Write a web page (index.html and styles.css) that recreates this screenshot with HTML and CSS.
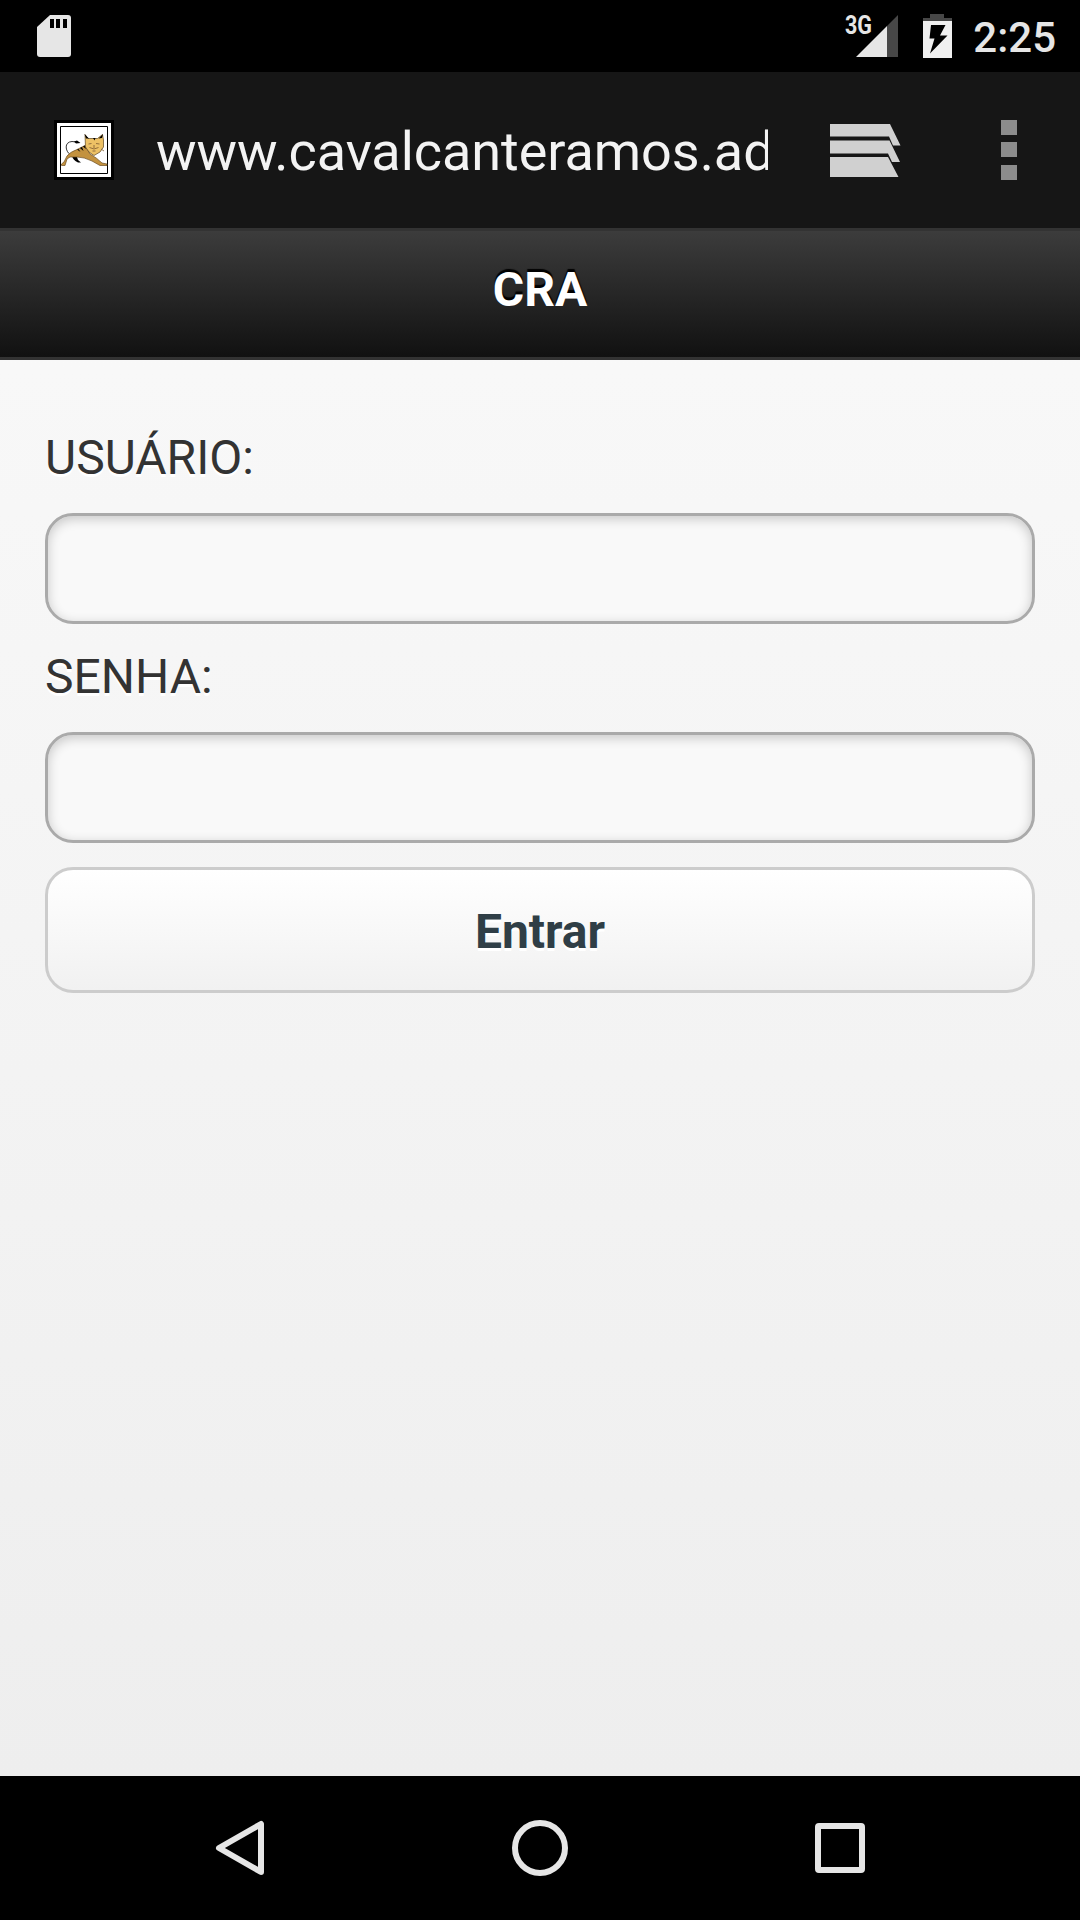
FILE: index.html
```html
<!DOCTYPE html>
<html lang="pt-BR">
<head>
    <meta charset="UTF-8">
    <meta name="viewport" content="width=device-width, initial-scale=1.0">
    <title>CRA</title>
    <link rel="stylesheet" href="styles.css">
</head>
<body>
    <!-- Status bar -->
    <div class="status-bar">
        <svg class="sd-card" width="34" height="42" viewBox="0 0 34 42">
            <path fill="#e6e6e6" d="M13 0H31Q34 0 34 3V39Q34 42 31 42H3Q0 42 0 39V12Z"/>
            <path d="M13 4h4v9h-4zM19 4h4v9h-4zM26 4h4v9h-4z"/>
        </svg>
        <div class="status-right">
            <svg class="signal" width="54" height="42" viewBox="0 0 54 42">
                <path fill="#474747" d="M54 0V42H43V11Z"/>
                <path fill="#e6e6e6" d="M12 42L43 11V42Z"/>
                <text x="1" y="18.500" textLength="27" lengthAdjust="spacingAndGlyphs">3G</text>
            </svg>
            <svg class="battery" width="29" height="44" viewBox="0 0 29 44">
                <path fill="#474747" d="M7 0H21V4H29V7H0V4H7Z"/>
                <path fill="#f0f0f0" d="M0 7H29V44H0Z"/>
                <path d="M8 11H22.500L17 21.500H24.500L7 39.500L11.500 24.500H6.500Z"/>
            </svg>
            <span class="clock">2:25</span>
        </div>
    </div>

    <!-- Address bar -->
    <div class="url-bar">
        <svg class="favicon" width="60" height="60" viewBox="0 0 60 60">
            <path d="M0 0H60V60H0Z"/>
            <path fill="#fff" d="M3 3H57V57H3Z"/>
            <path fill="none" stroke="#000" d="M6.500 6.500H53.500V53.500H6.500Z"/>
            <path fill="none" stroke="#333" d="M16.500 35C11 31 10 22 18 21.500L22 22"/>
            <path d="M20 21.500L23 20.500L26.500 23L22 23.500ZM18 36L23 37L24 40L27 42.500H24Q19 40 18 36Z"/>
            <path fill="#c3923f" stroke="#6b4e22" stroke-width=".7" d="M7.500 45.500V44L10 42L13 36Q16 32 23 29.500L31 25.500L36 34Q43 38 48 43L53 44V45.500H46L38 41Q30 37 23 37L16 37L13 39L11 45.500Z"/>
            <path fill="#edc165" stroke="#5d4520" stroke-width=".7" d="M31 14.500L34 18.500H43.500L48.500 14.500L49.500 20V27L46 32L40 35.500L35 32L31.500 27Z"/>
            <path d="M30.500 14L35 18.500L32 18.500ZM49 14L44.500 18.500L48 18ZM39 18H41.500L40.500 20.500ZM23 29.500L24.500 29L26.500 32ZM26 28L28 27L29.500 31ZM29 26.500L30.500 25.500L32 29Z"/>
            <path fill="none" stroke="#7c5930" stroke-width=".8" d="M34.500 24L37.500 23.500M42 23.500L45.500 24M35.500 27.500Q40 30.500 44.500 27.500M40 25V28M38.500 31H41.500M47 29L50 31"/>
        </svg>
        <div class="url">www.cavalcanteramos.ad</div>
        <svg class="tabs" width="72" height="54" viewBox="0 0 72 54">
            <path fill="#d0d0d0" d="M0 0H60L70.500 21.500H63L59 12.500H0ZM0 16.500H59.500L70 38H62L58 29.500H0ZM0 33H58L68.500 53H0Z"/>
        </svg>
        <svg class="menu" width="16" height="60" viewBox="0 0 16 60">
            <path fill="#8c8c8c" d="M0 0H16V15H0ZM0 22H16V37H0ZM0 45H16V60H0Z"/>
        </svg>
    </div>

    <!-- Login page -->
    <div class="page">
        <div class="header"><h1>CRA</h1></div>
        <form class="content">
            <label for="usuario">USUÁRIO:</label>
            <input type="text" id="usuario">
            <label for="senha">SENHA:</label>
            <input type="password" id="senha">
            <button type="button">Entrar</button>
        </form>
    </div>

    <!-- Navigation buttons -->
    <div class="nav-bar">
        <svg width="60" height="60" viewBox="0 0 60 60">
            <path d="M51 6V54L9 30Z"/>
        </svg>
        <svg width="60" height="60" viewBox="0 0 60 60">
            <circle cx="30" cy="30" r="25"/>
        </svg>
        <svg width="60" height="60" viewBox="0 0 60 60">
            <rect x="8" y="8" width="44" height="44" rx="1"/>
        </svg>
    </div>
</body>
</html>
```
FILE: styles.css
```css
* {
    box-sizing: border-box;
}

body {
    margin: 0;
    height: 1920px;
    display: flex;
    flex-direction: column;
    font-family: Roboto, sans-serif;
    background: #000;
    overflow: hidden;
}

svg {
    display: block;
    flex: none;
}

/* Status bar */
.status-bar {
    height: 72px;
    display: flex;
    justify-content: space-between;
    padding: 0 24px 0 37px;
    background: #000;
}

.sd-card {
    margin-top: 15px;
}

.status-right {
    display: flex;
}

.signal {
    margin-top: 15px;
    overflow: visible;
}

.signal text {
    font-size: 25px;
    font-weight: 700;
    fill: #e6e6e6;
}

.battery {
    margin: 14px 21px 0 25px;
}

.clock {
    font-size: 42px;
    font-weight: 500;
    line-height: 76px;
    color: #e6e6e6;
}

/* Address bar */
.url-bar {
    height: 156px;
    display: flex;
    align-items: center;
    padding: 0 63px 0 54px;
    background: #161616;
}

.url {
    width: 612px;
    margin-left: 42px;
    padding-top: 4px;
    font-size: 54px;
    line-height: 72px;
    letter-spacing: -0.05px;
    color: #f3f3f3;
    white-space: nowrap;
    overflow: hidden;
}

.tabs {
    margin: 2px 0 0 62px;
}

.menu {
    margin-left: auto;
}

/* Login page */
.page {
    flex: 1;
    background: linear-gradient(#f9f9f9, #eee);
}

.header {
    height: 132px;
    border-top: 3px solid #333;
    border-bottom: 3px solid #333;
    background: linear-gradient(#3c3c3c, #111);
}

.header h1 {
    margin: 0;
    font-size: 48px;
    font-weight: 700;
    line-height: 118px;
    text-align: center;
    color: #fff;
    text-shadow: 0 -3px 1px #000;
}

.content {
    display: flex;
    flex-direction: column;
    padding: 62px 45px 0;
}

label {
    font-size: 48px;
    line-height: 72px;
    margin-bottom: 19px;
    color: #333;
    text-shadow: 0 3px 0 #fff;
}

input {
    height: 111px;
    margin: 0 0 17px;
    padding: 0 20px;
    border: 3px solid #aaa;
    border-radius: 28px;
    background: #f9f9f9;
    box-shadow: inset 0 3px 12px rgba(0, 0, 0, 0.2);
    font: 48px Roboto, sans-serif;
    outline: none;
}

button {
    height: 126px;
    margin-top: 7px;
    padding-top: 3px;
    border: 3px solid #ccc;
    border-radius: 28px;
    background: linear-gradient(#fff, #f1f1f1);
    font: 700 48px Roboto, sans-serif;
    color: #2f3e46;
    text-shadow: 0 3px 0 #fff;
}

/* Navigation buttons */
.nav-bar {
    height: 144px;
    display: flex;
    justify-content: center;
    align-items: center;
    gap: 240px;
    background: #000;
}

.nav-bar svg {
    fill: none;
    stroke: #e6e6e6;
    stroke-width: 6;
    stroke-linejoin: round;
}
```
